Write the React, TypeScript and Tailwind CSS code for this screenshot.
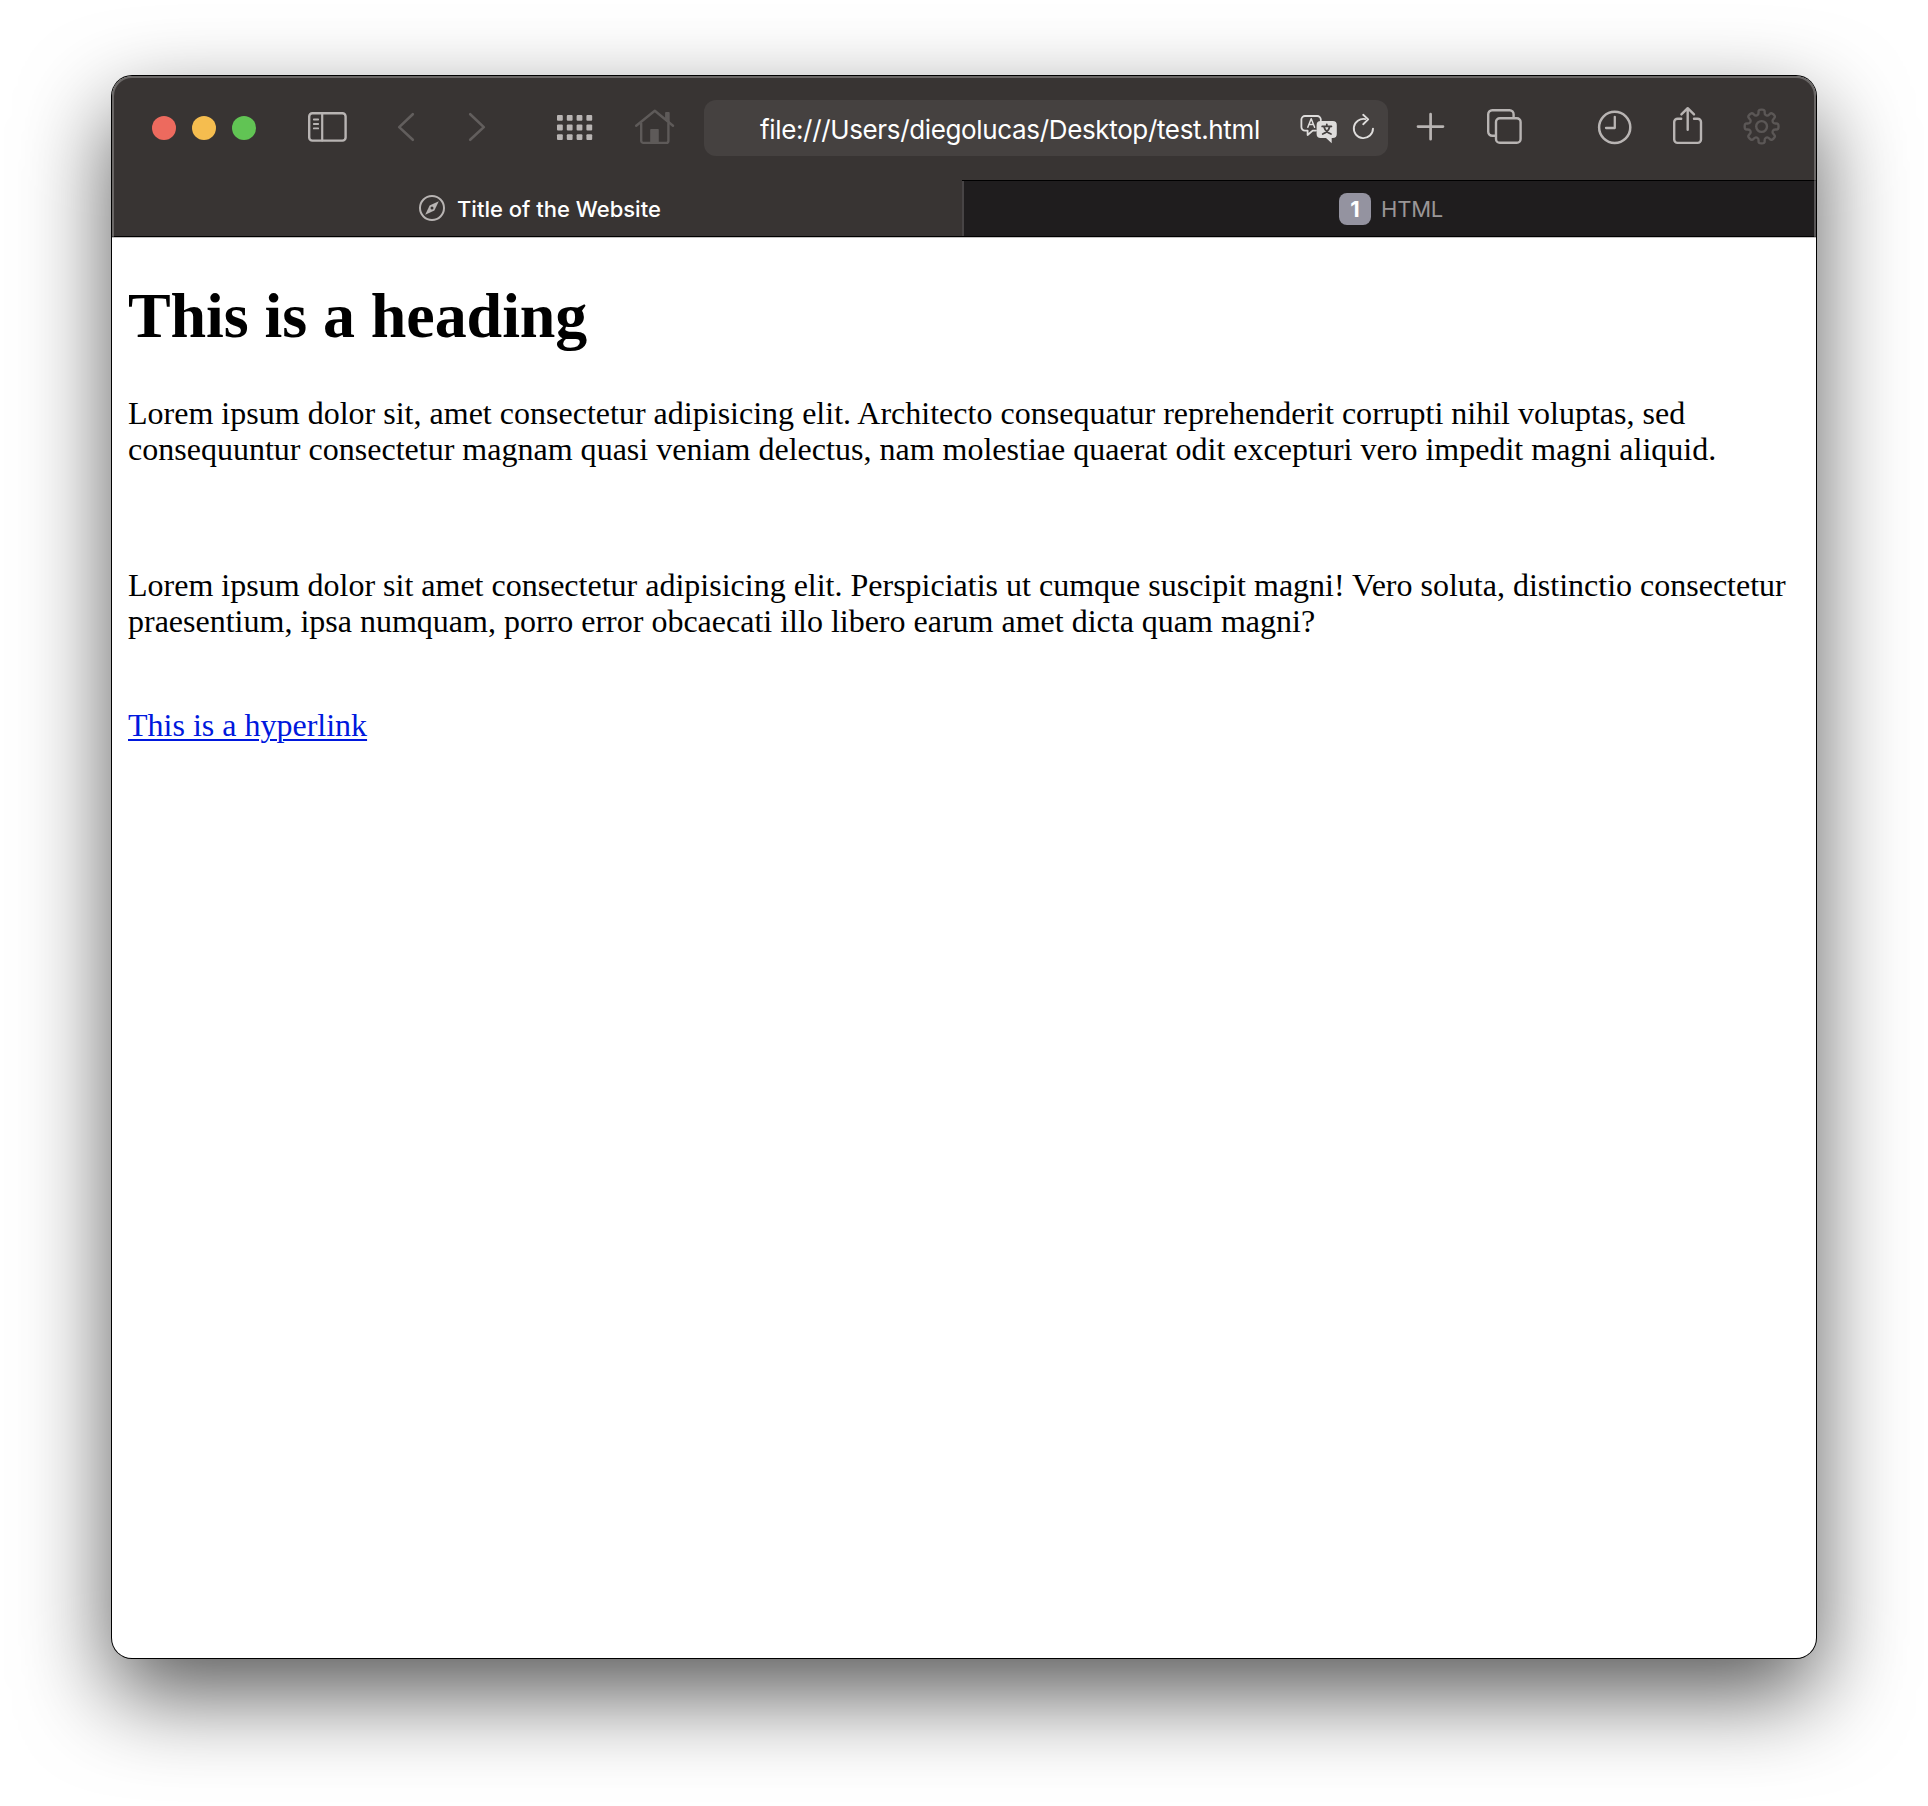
import React from "react";

const iconProps = {
  height: 40,
  fill: "none",
  stroke: "currentColor",
  strokeLinecap: "round" as const,
  strokeLinejoin: "round" as const,
};

/** Eight-toothed gear outline with rounded corners. */
function gearPath(cx: number, cy: number) {
  const pts: [number, number][] = [];
  const add = (r: number, deg: number) => {
    const a = (deg * Math.PI) / 180;
    pts.push([cx + r * Math.cos(a), cy + r * Math.sin(a)]);
  };
  for (let i = 0; i < 8; i++) {
    const b = i * 45;
    add(12.2, b - 14);
    add(17.2, b - 10.5);
    add(17.2, b + 10.5);
    add(12.2, b + 14);
  }
  const f = (n: number) => n.toFixed(2);
  const cut = (p: [number, number], q: [number, number], t: number) =>
    `${f(p[0] + (q[0] - p[0]) * t)} ${f(p[1] + (q[1] - p[1]) * t)}`;
  const n = pts.length;
  let d = "";
  for (let i = 0; i < n; i++) {
    const prev = pts[(i + n - 1) % n];
    const cur = pts[i];
    const next = pts[(i + 1) % n];
    d += `${i === 0 ? "M" : "L"}${cut(cur, prev, 0.42)}Q${f(cur[0])} ${f(cur[1])} ${cut(cur, next, 0.42)}`;
  }
  return d + "Z";
}

function Toolbar() {
  return (
    <div className="flex h-[104px] items-start pt-[30px] text-[#b8b4b3]">
      <div className="ml-10 mt-2.5 flex gap-4">
        <span className="size-6 rounded-full bg-[#ed6a5e]" />
        <span className="size-6 rounded-full bg-[#f5bd4f]" />
        <span className="size-6 rounded-full bg-[#61c454]" />
      </div>
      <svg {...iconProps} width={40} viewBox="0 0 40 40" className="ml-[52px]" strokeWidth={2.4}>
        <rect x="1.2" y="7.2" width="36.4" height="27.4" rx="3.2" />
        <path d="M14.2 7.5v27" strokeWidth={2.2} />
        <path d="M5.8 13.5h4.4M5.8 18h4.4M5.8 22.4h4.4" strokeWidth={1.8} />
      </svg>
      <svg {...iconProps} width={20} viewBox="0 0 20 40" className="ml-12 text-[#625e5d]" strokeWidth={2.6}>
        <path d="M16.8 8.2 3.2 21.1l13.6 12.7" />
      </svg>
      <svg {...iconProps} width={20} viewBox="0 0 20 40" className="ml-[51px] text-[#625e5d]" strokeWidth={2.6}>
        <path d="M3.2 8.2l13.6 12.9L3.2 33.8" />
      </svg>
      <svg {...iconProps} width={40} viewBox="0 0 40 40" className="ml-[68px]" stroke="none" fill="currentColor">
        {[0, 1, 2].map((r) =>
          [0, 1, 2, 3].map((c) => (
            <rect key={`${r}-${c}`} x={2 + c * 9.8} y={9 + r * 9.6} width="5.8" height="5.8" rx="1" />
          )),
        )}
      </svg>
      <svg {...iconProps} width={40} viewBox="0 0 40 40" className="ml-10 text-[#5e5a59]" strokeWidth={2.4}>
        <path d="M1.2 19.8 19.8 4.8 38 19.8" />
        <path d="M6.2 17.5v17.2a2.2 2.2 0 0 0 2.2 2.2h22.8a2.2 2.2 0 0 0 2.2-2.2V17.5" />
        <path d="M31 12.5V7h2.8v9" fill="currentColor" strokeWidth={1.8} />
        <path d="M15.2 36.5V23.8a.8.8 0 0 1 .8-.8h7a.8.8 0 0 1 .8.8v12.7z" fill="currentColor" stroke="none" />
      </svg>
      <div className="-mt-1.5 ml-[29px] flex h-14 w-[684px] rounded-xl bg-[#454140] pt-1.5 text-[#dedcdb]">
        <span className="ml-14 w-[510px] whitespace-nowrap font-[Inter] text-[26px] leading-[48px] tracking-[-0.35px] text-white">
          file:///Users/diegolucas/Desktop/test.html
        </span>
        <svg {...iconProps} width={40} viewBox="0 0 40 40" className="ml-[29px]" strokeWidth={1.8}>
          <path d="M17 24.6h-3.3L8.6 29v-4.4H6a3.6 3.6 0 0 1-3.6-3.6v-7.4A3.6 3.6 0 0 1 6 10h12.2a3.6 3.6 0 0 1 3.6 3.6v.9" />
          <path d="M8.8 21.3l3.4-8.6 3.4 8.6M10 18.6h4.4" strokeWidth={1.5} />
          <path d="M21.6 15h12.2a4 4 0 0 1 4 4v9a4 4 0 0 1-4 4h-1.1v5.2L27 32h-5.4a4 4 0 0 1-4-4v-9a4 4 0 0 1 4-4z" fill="currentColor" stroke="none" />
          <path d="M23.2 20.4h9.2M27.8 18.4v2M30.7 20.8c-.9 3.4-3.4 5.8-7 7.2M25 20.8c.9 3.4 3.4 5.8 7 7.2" stroke="#454140" strokeWidth={1.8} />
        </svg>
        <svg {...iconProps} width={26} viewBox="0 0 26 40" className="ml-3" strokeWidth={1.9}>
          <path d="M14.3 13.1A9.6 9.6 0 1 0 22 22.6" />
          <path d="M12.2 8.8l5 4.6-5 4.8" />
        </svg>
      </div>
      <svg {...iconProps} width={30} viewBox="0 0 30 40" className="ml-7" strokeWidth={2.7}>
        <path d="M14.6 8.2v25M2 20.6h25" />
      </svg>
      <svg {...iconProps} width={40} viewBox="0 0 40 40" className="ml-[40px]" strokeWidth={2.4}>
        <path d="M8.8 29.8H6.2a4 4 0 0 1-4-4V8.2a4 4 0 0 1 4-4h17.4a4 4 0 0 1 4 4v2.6" />
        <rect x="10" y="12.2" width="24.6" height="24.6" rx="3.8" />
      </svg>
      <svg {...iconProps} width={40} viewBox="0 0 40 40" className="ml-[70px]" strokeWidth={2.5}>
        <circle cx="18.7" cy="21.3" r="15.6" />
        <path d="M18.8 10.8v11.2H10" strokeWidth={2.3} />
      </svg>
      <svg {...iconProps} width={36} viewBox="0 0 36 40" className="ml-[34px]" strokeWidth={2.4}>
        <path d="M11.2 12.7H7.6a3.4 3.4 0 0 0-3.4 3.4v17.4a3.4 3.4 0 0 0 3.4 3.4h20a3.4 3.4 0 0 0 3.4-3.4V16.1a3.4 3.4 0 0 0-3.4-3.4H24" />
        <path d="M17.7 23.8V2.4M11.4 8.4l6.3-6.2 6.3 6.2" />
      </svg>
      <svg {...iconProps} width={40} viewBox="0 0 40 40" className="ml-[36px] text-[#5b5756]" strokeWidth={2.4}>
        <path d={gearPath(19.6, 20.5)} />
        <circle cx="19.6" cy="20.5" r="5.4" />
      </svg>
    </div>
  );
}

function TabBar() {
  return (
    <div className="flex h-[57px] border-b border-black font-[Inter] text-[22px] leading-[30px]">
      <div className="flex w-[850px] pl-[306px] pt-[14px] text-white">
        <svg width={28} height={28} viewBox="0 0 28 28" fill="none" stroke="#b8b4b3" strokeWidth={2}>
          <circle cx="14" cy="14" r="12" />
          <path d="M20.8 7.2 16.4 16.4 7.2 20.8 11.6 11.6z" fill="#b8b4b3" stroke="none" />
          <circle cx="14" cy="14" r="1.5" fill="#383433" stroke="none" />
        </svg>
        <span className="ml-[11px] whitespace-nowrap font-medium">Title of the Website</span>
      </div>
      <div className="flex flex-1 flex-col bg-[#1f1d1e]">
        <div className="h-px bg-black" />
        <div className="flex flex-1 border-l-2 border-[#474445] pl-[375px] pt-3 text-[#9a9697]">
          <span className="size-8 rounded-lg bg-[#9493a0] text-center font-bold leading-8 text-white">1</span>
          <span className="ml-[10px] leading-8 tracking-[-0.2px]">HTML</span>
        </div>
      </div>
    </div>
  );
}

export default function App() {
  return (
    <div className="h-[1806px] w-[1928px] overflow-hidden bg-white pl-[112px] pt-[76px]">
      <div className="h-[1582px] w-[1704px] rounded-[20px] bg-white shadow-[0_0_0_1px_#000,0_36px_90px_rgba(0,0,0,0.66)]">
        <div className="h-full overflow-hidden rounded-[20px]">
          <header className="relative h-[161px] bg-[#383433]">
            <Toolbar />
            <TabBar />
            <div className="pointer-events-none absolute inset-0 rounded-t-[20px] border-x-2 border-t-2 border-white/25" />
          </header>
          <main className="border-t border-[#c4c2c2] px-4 pt-[41px] font-['Liberation_Serif',serif] text-[32px] leading-9 whitespace-nowrap text-black">
            <h1 className="text-[64px] font-bold leading-[73px] tracking-[-0.08px]">This is a heading</h1>
            <p className="mt-[43px] tracking-[0.01px]">
              Lorem ipsum dolor sit, amet consectetur adipisicing elit. Architecto consequatur reprehenderit corrupti nihil voluptas, sed
              <br />
              consequuntur consectetur magnam quasi veniam delectus, nam molestiae quaerat odit excepturi vero impedit magni aliquid.
            </p>
            <p className="mt-[100px]">
              Lorem ipsum dolor sit amet consectetur adipisicing elit. Perspiciatis ut cumque suscipit magni! Vero soluta, distinctio consectetur
              <br />
              praesentium, ipsa numquam, porro error obcaecati illo libero earum amet dicta quam magni?
            </p>
            <a href="#" className="mt-[68px] inline-block text-[#0018dd] underline decoration-2 underline-offset-[3px]">
              This is a hyperlink
            </a>
          </main>
        </div>
      </div>
    </div>
  );
}
